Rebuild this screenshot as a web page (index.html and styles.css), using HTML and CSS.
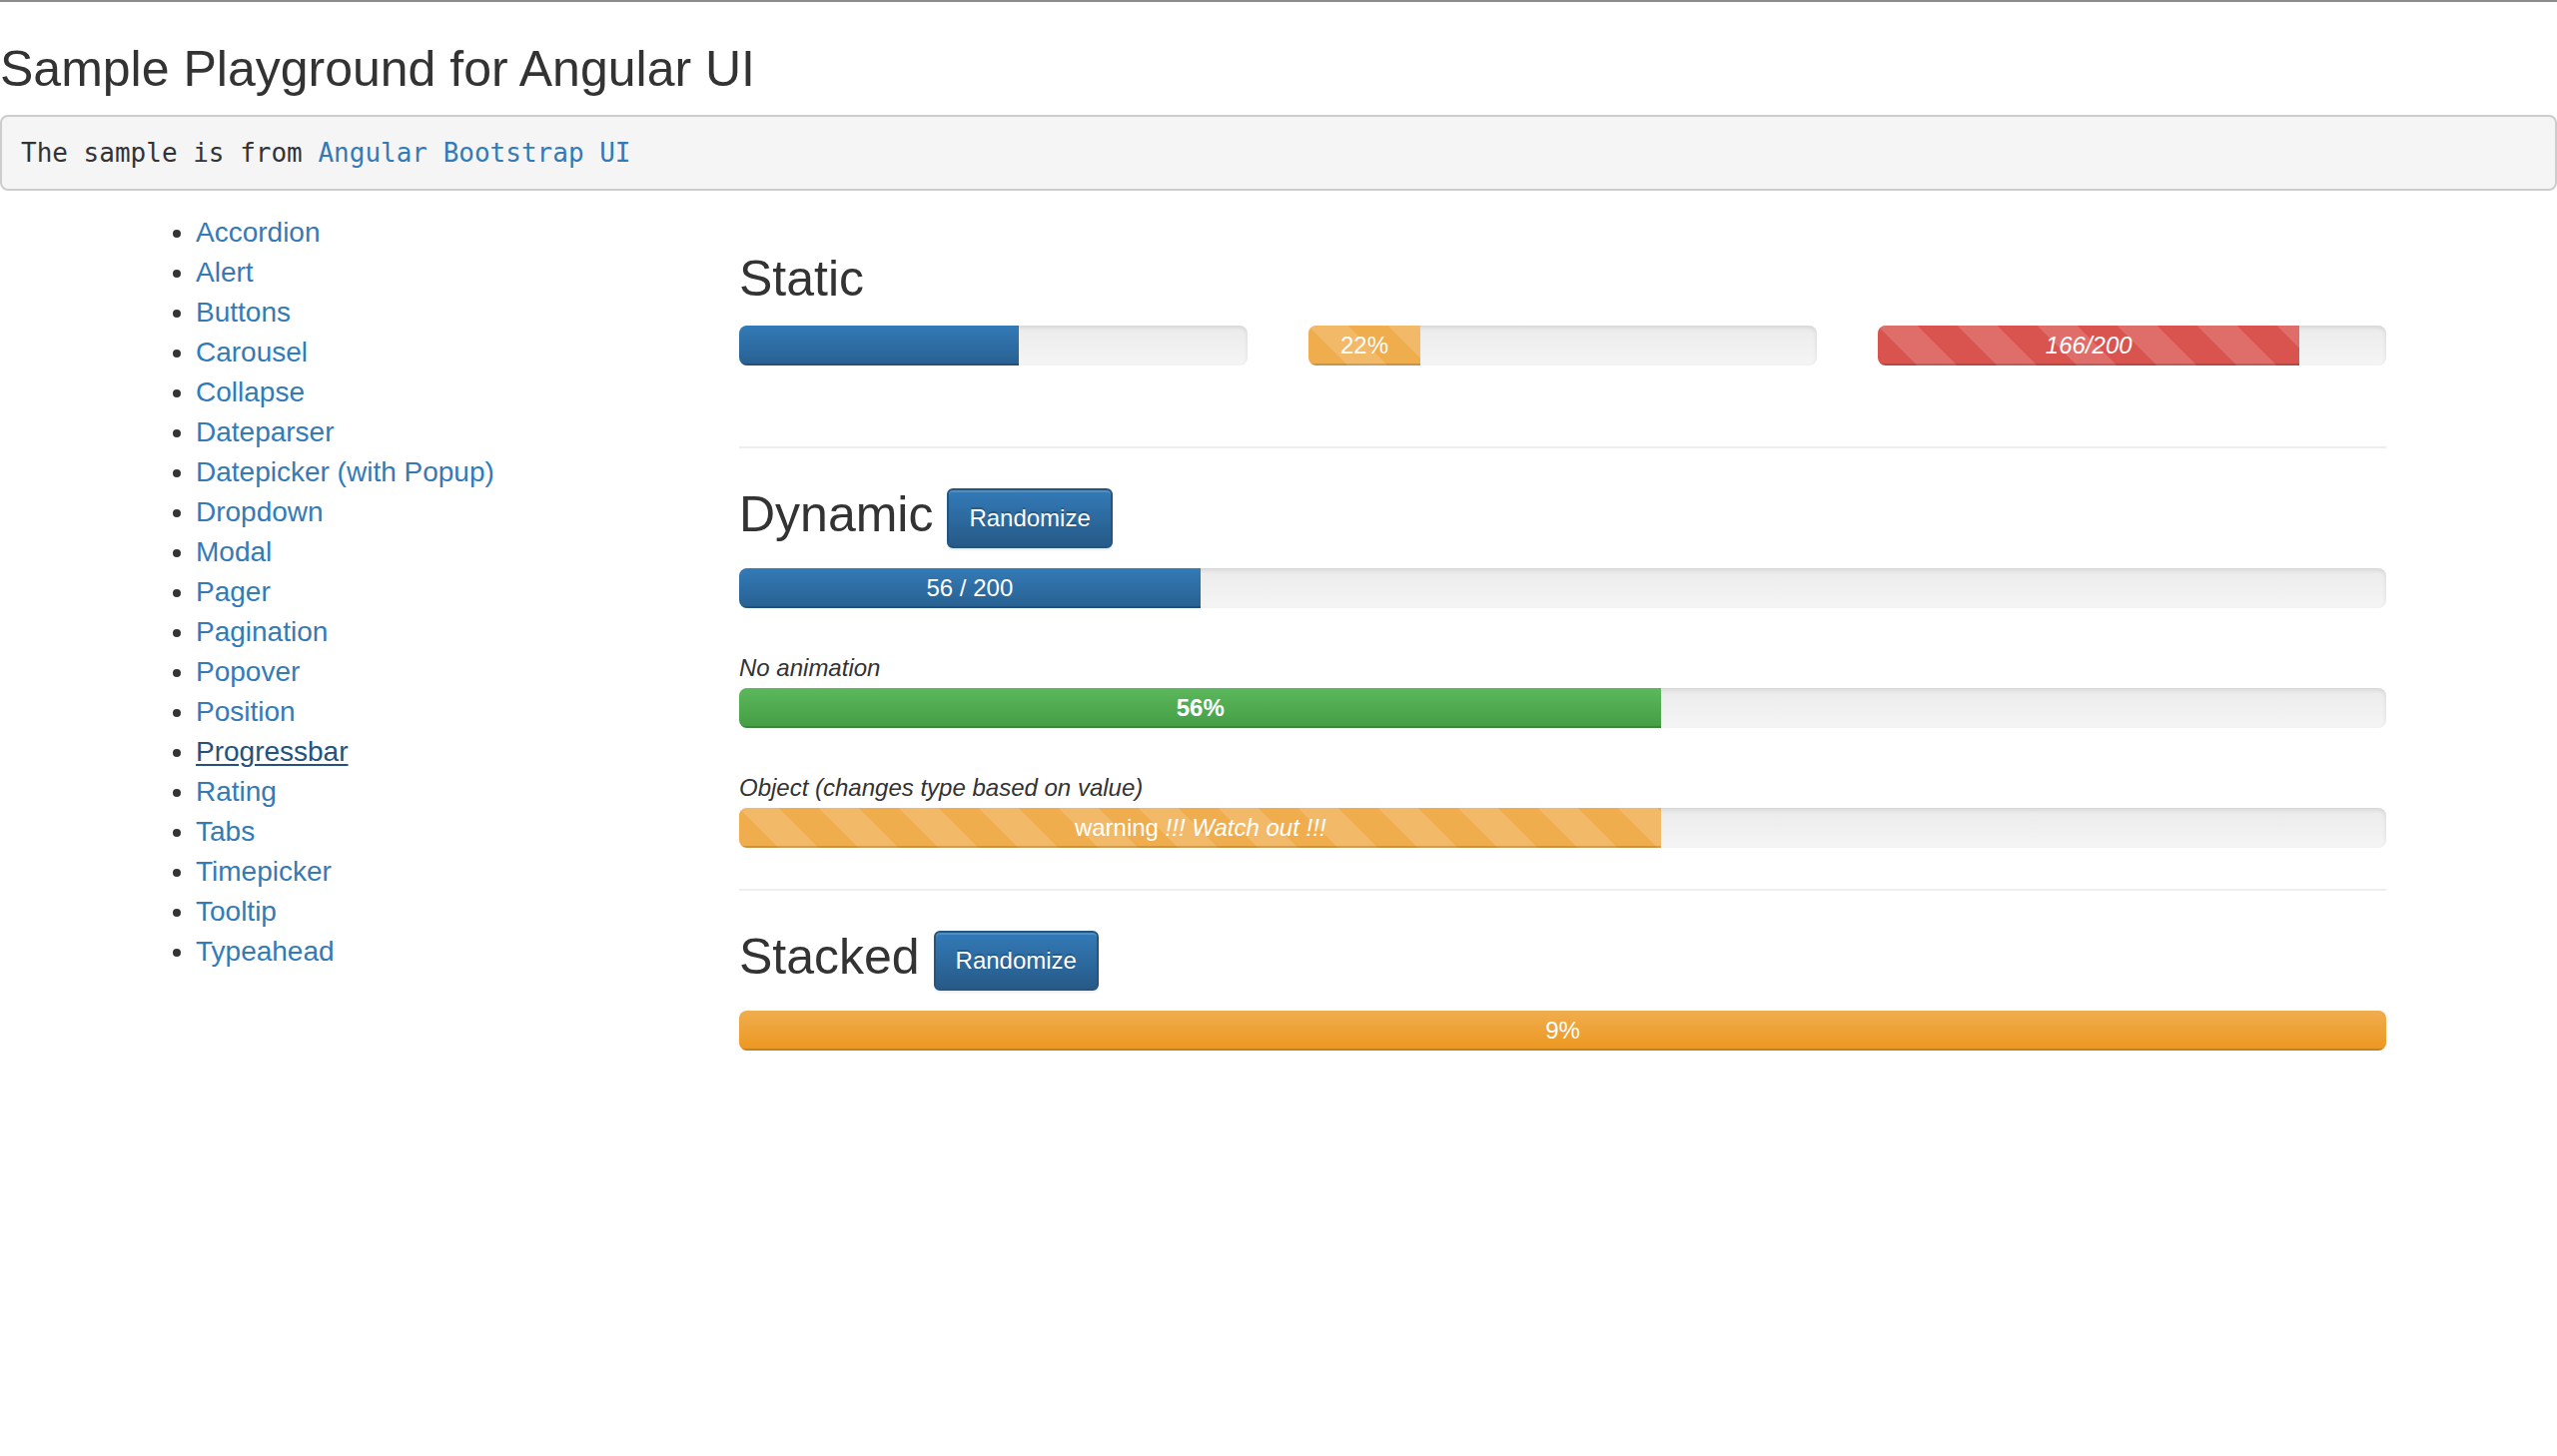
FILE: index.html
```html
<!DOCTYPE html>
<html lang="en">
<head>
<meta charset="utf-8">
<title>Sample Playground for Angular UI</title>
<link rel="stylesheet" href="styles.css">
</head>
<body>
<h1 class="page-title">Sample Playground for Angular UI</h1>
<pre class="intro">The sample is from <a href="#">Angular Bootstrap UI</a></pre>
<div class="layout">
  <nav class="side">
    <ul class="nav-list">
      <li><a href="#">Accordion</a></li>
      <li><a href="#">Alert</a></li>
      <li><a href="#">Buttons</a></li>
      <li><a href="#">Carousel</a></li>
      <li><a href="#">Collapse</a></li>
      <li><a href="#">Dateparser</a></li>
      <li><a href="#">Datepicker (with Popup)</a></li>
      <li><a href="#">Dropdown</a></li>
      <li><a href="#">Modal</a></li>
      <li><a href="#">Pager</a></li>
      <li><a href="#">Pagination</a></li>
      <li><a href="#">Popover</a></li>
      <li><a href="#">Position</a></li>
      <li><a href="#" class="active">Progressbar</a></li>
      <li><a href="#">Rating</a></li>
      <li><a href="#">Tabs</a></li>
      <li><a href="#">Timepicker</a></li>
      <li><a href="#">Tooltip</a></li>
      <li><a href="#">Typeahead</a></li>
    </ul>
  </nav>
  <main class="content">
    <h3 class="section-title">Static</h3>
    <div class="static-row">
      <div class="progress"><div class="bar bar-primary" style="width:55%"></div></div>
      <div class="progress"><div class="bar bar-warning striped" style="width:22%">22%</div></div>
      <div class="progress"><div class="bar bar-danger striped" style="width:83%"><i>166/200</i></div></div>
    </div>
    <hr class="divider">
    <h3 class="section-title">Dynamic <button class="btn">Randomize</button></h3>
    <div class="progress"><div class="bar bar-primary" style="width:28%">56 / 200</div></div>
    <small class="caption"><em>No animation</em></small>
    <div class="progress"><div class="bar bar-success" style="width:56%"><b>56%</b></div></div>
    <small class="caption"><em>Object (changes type based on value)</em></small>
    <div class="progress"><div class="bar bar-warning striped" style="width:56%">warning <i>!!! Watch out !!!</i></div></div>
    <hr class="divider">
    <h3 class="section-title">Stacked <button class="btn">Randomize</button></h3>
    <div class="progress"><div class="bar bar-warning-grad" style="width:100%">9%</div></div>
  </main>
</div>
</body>
</html>
```
FILE: styles.css
```css
html {
  border-top: 2px solid #8c8c8c;
  background: #fff;
}
body {
  margin: 0;
  font-family: "Liberation Sans", Arial, Helvetica, sans-serif;
  font-size: 28px;
  line-height: 40px;
  color: #333;
  background: #fff;
}
a {
  color: #337ab7;
  text-decoration: none;
}
a.active {
  color: #23527c;
  text-decoration: underline;
  text-underline-offset: 3px;
}
.page-title {
  font-size: 50px;
  font-weight: 500;
  line-height: 55px;
  margin: 40px 0 18px;
}
.intro {
  margin: 0 0 22px;
  padding: 18px 19px;
  font-family: "DejaVu Sans Mono", "Liberation Mono", monospace;
  font-size: 26px;
  line-height: 36px;
  color: #333;
  background: #f5f5f5;
  border: 2px solid #ccc;
  border-radius: 8px;
}
.layout {
  display: flex;
  align-items: flex-start;
}
.side {
  width: 624px;
  padding-left: 116px;
  flex: none;
}
.nav-list {
  margin: 0;
  padding-left: 80px;
}
.content {
  width: 1649px;
  flex: none;
}
.section-title {
  font-size: 50px;
  font-weight: 500;
  line-height: 53px;
  margin: 40px 0 20px;
}
.static-row {
  display: grid;
  grid-template-columns: repeat(3, 1fr);
  column-gap: 61px;
}
.progress {
  height: 40px;
  margin-bottom: 40px;
  overflow: hidden;
  border-radius: 8px;
  background-image: linear-gradient(to bottom, #ebebeb 0%, #f5f5f5 100%);
  box-shadow: inset 0 2px 4px rgba(0, 0, 0, 0.1);
  display: flex;
}
.bar {
  height: 100%;
  font-size: 24px;
  line-height: 40px;
  color: #fff;
  text-align: center;
  white-space: nowrap;
  box-shadow: inset 0 -2px 0 rgba(0, 0, 0, 0.15);
}
.bar-primary {
  background-image: linear-gradient(to bottom, #337ab7 0%, #286090 100%);
}
.bar-success {
  background-image: linear-gradient(to bottom, #5cb85c 0%, #449d44 100%);
}
.bar-warning-grad {
  background-image: linear-gradient(to bottom, #f0ad4e 0%, #ec971f 100%);
}
.bar-warning {
  background-color: #f0ad4e;
}
.bar-danger {
  background-color: #d9534f;
}
.striped {
  background-image: linear-gradient(45deg, rgba(255,255,255,.15) 25%, transparent 25%, transparent 50%, rgba(255,255,255,.15) 50%, rgba(255,255,255,.15) 75%, transparent 75%, transparent);
  background-size: 80px 80px;
}
.divider {
  margin: 41px 0 40px;
  border: 0;
  border-top: 2px solid #eee;
}
.caption {
  display: block;
  font-size: 24px;
  line-height: 40px;
}
.btn {
  display: inline-block;
  vertical-align: middle;
  font-family: "Liberation Sans", Arial, Helvetica, sans-serif;
  font-size: 24px;
  line-height: 36px;
  padding: 10px 20px;
  color: #fff;
  border: 2px solid #245580;
  border-radius: 6px;
  background-image: linear-gradient(to bottom, #337ab7 0%, #265a88 100%);
  text-shadow: 0 -2px 0 rgba(0, 0, 0, 0.2);
  box-shadow: inset 0 2px 0 rgba(255, 255, 255, 0.15), 0 2px 2px rgba(0, 0, 0, 0.075);
  margin: 0;
}
```
